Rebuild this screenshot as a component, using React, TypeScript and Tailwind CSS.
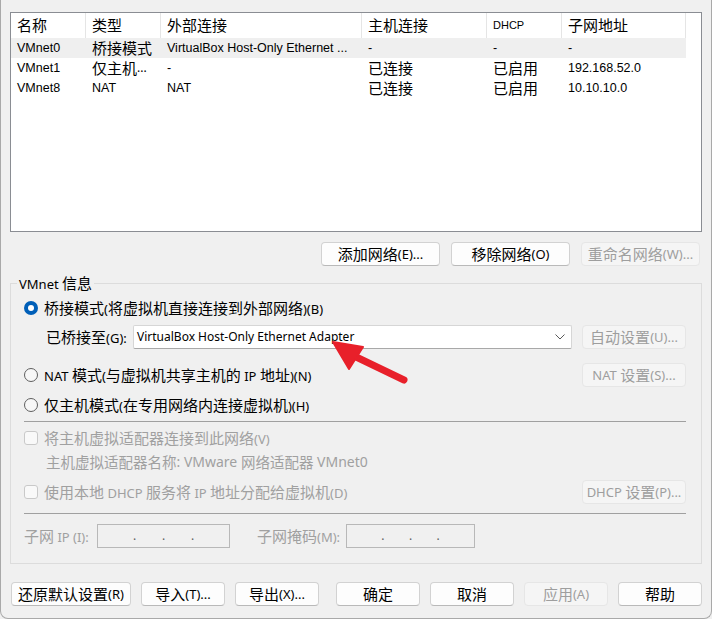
import React from "react";

const UI = "font-['Noto_Sans','Noto_Sans_CJK_SC',sans-serif]";
const TBL = "font-['Liberation_Sans','Noto_Sans_CJK_SC',sans-serif]";

function T({ children, latin = "text-[13px]" }: { children: string; latin?: string }) {
  const parts = children.split(/([\u3000-\u9fff\uff00-\uffef]+)/).filter((p) => p.length > 0);
  return (
    <>
      {parts.map((p, i) =>
        /[\u3000-\u9fff\uff00-\uffef]/.test(p) ? (
          <span key={i}>{p}</span>
        ) : (
          <span key={i} className={latin + " whitespace-pre"}>
            {p}
          </span>
        )
      )}
    </>
  );
}

function Btn({
  children,
  disabled,
  className = "",
}: {
  children: string;
  disabled?: boolean;
  className?: string;
}) {
  return (
    <div
      className={
        "flex items-center justify-center h-[24px] rounded-[4px] border text-[15px] leading-none whitespace-nowrap " +
        (disabled
          ? "bg-[#f5f5f5] border-[#e6e6e6] text-[#9e9e9e] "
          : "bg-[#fdfdfd] border-[#d2d2d2] border-b-[#b9b9b9] text-black ") +
        className
      }
    >
      <T>{children}</T>
    </div>
  );
}

function Radio({ checked }: { checked?: boolean }) {
  return checked ? (
    <div className="w-[14px] h-[14px] rounded-full bg-[#005fb8] flex items-center justify-center shrink-0">
      <div className="w-[6px] h-[6px] rounded-full bg-white" />
    </div>
  ) : (
    <div className="w-[14px] h-[14px] rounded-full border border-[#5f5f5f] bg-[#f7f7f7] shrink-0" />
  );
}

function Check() {
  return <div className="w-[14px] h-[14px] rounded-[3px] border border-[#c9c9c9] bg-[#f9f9f9] shrink-0" />;
}

const cols = [75, 75, 201, 125, 75, 124];
const headers = ["名称", "类型", "外部连接", "主机连接", "DHCP", "子网地址"];
const rows = [
  ["VMnet0", "桥接模式", "VirtualBox Host-Only Ethernet ...", "-", "-", "-"],
  ["VMnet1", "仅主机...", "-", "已连接", "已启用", "192.168.52.0"],
  ["VMnet8", "NAT", "NAT", "已连接", "已启用", "10.10.10.0"],
];

function isCjk(s: string) {
  return /[\u4e00-\u9fff]/.test(s);
}

export default function App() {
  return (
    <div className={"relative w-[712px] h-[619px] bg-[#f0f0f0] overflow-hidden " + UI}>
      <div className="flex flex-col px-[10px] pt-[12px]">
        {/* List view */}
        <div className="h-[220px] border border-[#8a8d93] bg-white flex flex-col">
          <div className="flex h-[25px]">
            {headers.map((h, i) => (
              <div
                key={i}
                style={{ width: cols[i] }}
                className={
                  "border-r border-[#e5e5e5] flex items-center pl-[6px] text-black leading-none " +
                  (h === "DHCP" ? TBL + " text-[11px]" : "text-[15px]")
                }
              >
                {h}
              </div>
            ))}
          </div>
          {rows.map((r, ri) => (
            <div key={ri} className={"flex h-[20px] w-[675px] " + (ri === 0 ? "bg-[#efefef]" : "")}>
              {r.map((c, ci) => (
                <div
                  key={ci}
                  style={{ width: cols[ci] }}
                  className={
                    "flex items-center pl-[6px] leading-none whitespace-nowrap overflow-hidden text-black " +
                    (isCjk(c) ? "text-[15px]" : TBL + " text-[12.5px]")
                  }
                >
                  {isCjk(c) ? <T latin="text-[12px]">{c}</T> : c}
                </div>
              ))}
            </div>
          ))}
        </div>

        {/* list buttons */}
        <div className="flex justify-end gap-[11px] pr-[2px] mt-[10px]">
          <Btn className="w-[119px]">添加网络(E)...</Btn>
          <Btn className="w-[119px]">移除网络(O)</Btn>
          <Btn className="w-[119px]" disabled>
            重命名网络(W)...
          </Btn>
        </div>

        {/* group box */}
        <div className="relative mt-[17px] h-[281px] border border-[#dcdcdc] flex flex-col pl-[13px] pr-[15px] text-[15px]">
          <div className="absolute left-[6px] top-[-9px] px-[2px] bg-[#f0f0f0] leading-[16px] text-black">
            <T>VMnet 信息</T>
          </div>

          <div className="mt-[14px] h-[20px] flex items-center gap-[6px] leading-none">
            <Radio checked />
            <span className="whitespace-nowrap">
              <T>桥接模式(将虚拟机直接连接到外部网络)(B)</T>
            </span>
          </div>

          <div className="mt-[6px] h-[26px] flex items-center">
            <span className="w-[109px] pl-[22px] leading-none whitespace-nowrap">
              <T>已桥接至(G):</T>
            </span>
            <div className="w-[439px] h-[24px] bg-white border border-[#d6d6d6] border-b-[#a8a8a8] rounded-[2px] flex items-center pl-[3px] pr-[6px]">
              <span className="flex-1 text-[12px] leading-none text-black whitespace-nowrap">
                VirtualBox Host-Only Ethernet Adapter
              </span>
              <svg width="10" height="6" viewBox="0 0 10 6">
                <path d="M0.5 0.5 L5 5 L9.5 0.5" fill="none" stroke="#5a5a5a" strokeWidth="1" />
              </svg>
            </div>
            <div className="flex-1" />
            <Btn disabled className="w-[104px]">
              自动设置(U)...
            </Btn>
          </div>

          <div className="mt-[13px] h-[24px] flex items-center gap-[6px] leading-none">
            <Radio />
            <span className="whitespace-nowrap">
              <T>NAT 模式(与虚拟机共享主机的 IP 地址)(N)</T>
            </span>
            <div className="flex-1" />
            <Btn disabled className="w-[104px]">
              NAT 设置(S)...
            </Btn>
          </div>

          <div className="mt-[8px] h-[20px] flex items-center gap-[6px] leading-none">
            <Radio />
            <span className="whitespace-nowrap">
              <T>仅主机模式(在专用网络内连接虚拟机)(H)</T>
            </span>
          </div>

          <div className="mt-[6px] h-px bg-[#a0a0a0]" />

          <div className="mt-[6px] h-[20px] flex items-center gap-[6px] leading-none text-[#a0a0a0]">
            <Check />
            <span className="whitespace-nowrap">
              <T>将主机虚拟适配器连接到此网络(V)</T>
            </span>
          </div>

          <div className="mt-[5px] h-[18px] flex items-center pl-[22px] text-[14.5px] leading-none text-[#a0a0a0] whitespace-nowrap">
            <T latin="text-[14px]">主机虚拟适配器名称: VMware 网络适配器 VMnet0</T>
          </div>

          <div className="mt-[9px] h-[24px] flex items-center gap-[6px] leading-none text-[#a0a0a0]">
            <Check />
            <span className="whitespace-nowrap">
              <T>使用本地 DHCP 服务将 IP 地址分配给虚拟机(D)</T>
            </span>
            <div className="flex-1" />
            <Btn disabled className="w-[104px]">
              DHCP 设置(P)...
            </Btn>
          </div>

          <div className="mt-[9px] h-px bg-[#a0a0a0]" />

          <div className="mt-[10px] h-[24px] flex items-center leading-none text-[#a0a0a0]">
            <span className="w-[73px] whitespace-nowrap">
              <T>子网 IP (I):</T>
            </span>
            <div className="w-[133px] h-[24px] border border-[#b8b8b8] bg-[#f0f0f0] flex items-center justify-around px-[22px] text-[#606060] text-[12px]">
              <span>.</span>
              <span>.</span>
              <span>.</span>
            </div>
            <span className="ml-[27px] w-[89px] whitespace-nowrap">
              <T>子网掩码(M):</T>
            </span>
            <div className="w-[129px] h-[24px] border border-[#b8b8b8] bg-[#f0f0f0] flex items-center justify-around px-[22px] text-[#606060] text-[12px]">
              <span>.</span>
              <span>.</span>
              <span>.</span>
            </div>
          </div>
        </div>

        {/* bottom buttons */}
        <div className="mt-[18px] flex items-center pl-[1px]">
          <Btn className="w-[120px]">还原默认设置(R)</Btn>
          <Btn className="w-[84px] ml-[10px]">导入(T)...</Btn>
          <Btn className="w-[84px] ml-[10px]">导出(X)...</Btn>
          <Btn className="w-[84px] ml-[17px]">确定</Btn>
          <Btn className="w-[84px] ml-[10px]">取消</Btn>
          <Btn className="w-[84px] ml-[10px]" disabled>
            应用(A)
          </Btn>
          <Btn className="w-[84px] ml-[10px]">帮助</Btn>
        </div>
      </div>

      {/* window bottom border */}
      <div
        className="absolute inset-0 rounded-b-[8px] border-x border-b border-[#a9a9a9] pointer-events-none"
        style={{ borderTop: "none" }}
      />

      {/* red annotation arrow */}
      <svg className="absolute left-0 top-0 pointer-events-none" width="712" height="619" viewBox="0 0 712 619">
        <line x1="404" y1="380" x2="352" y2="355" stroke="#e8202a" strokeWidth="7" strokeLinecap="round" />
        <polygon
          points="333,342 363,347 349,369"
          fill="#e8202a"
          stroke="#e8202a"
          strokeWidth="2"
          strokeLinejoin="round"
        />
      </svg>
    </div>
  );
}
